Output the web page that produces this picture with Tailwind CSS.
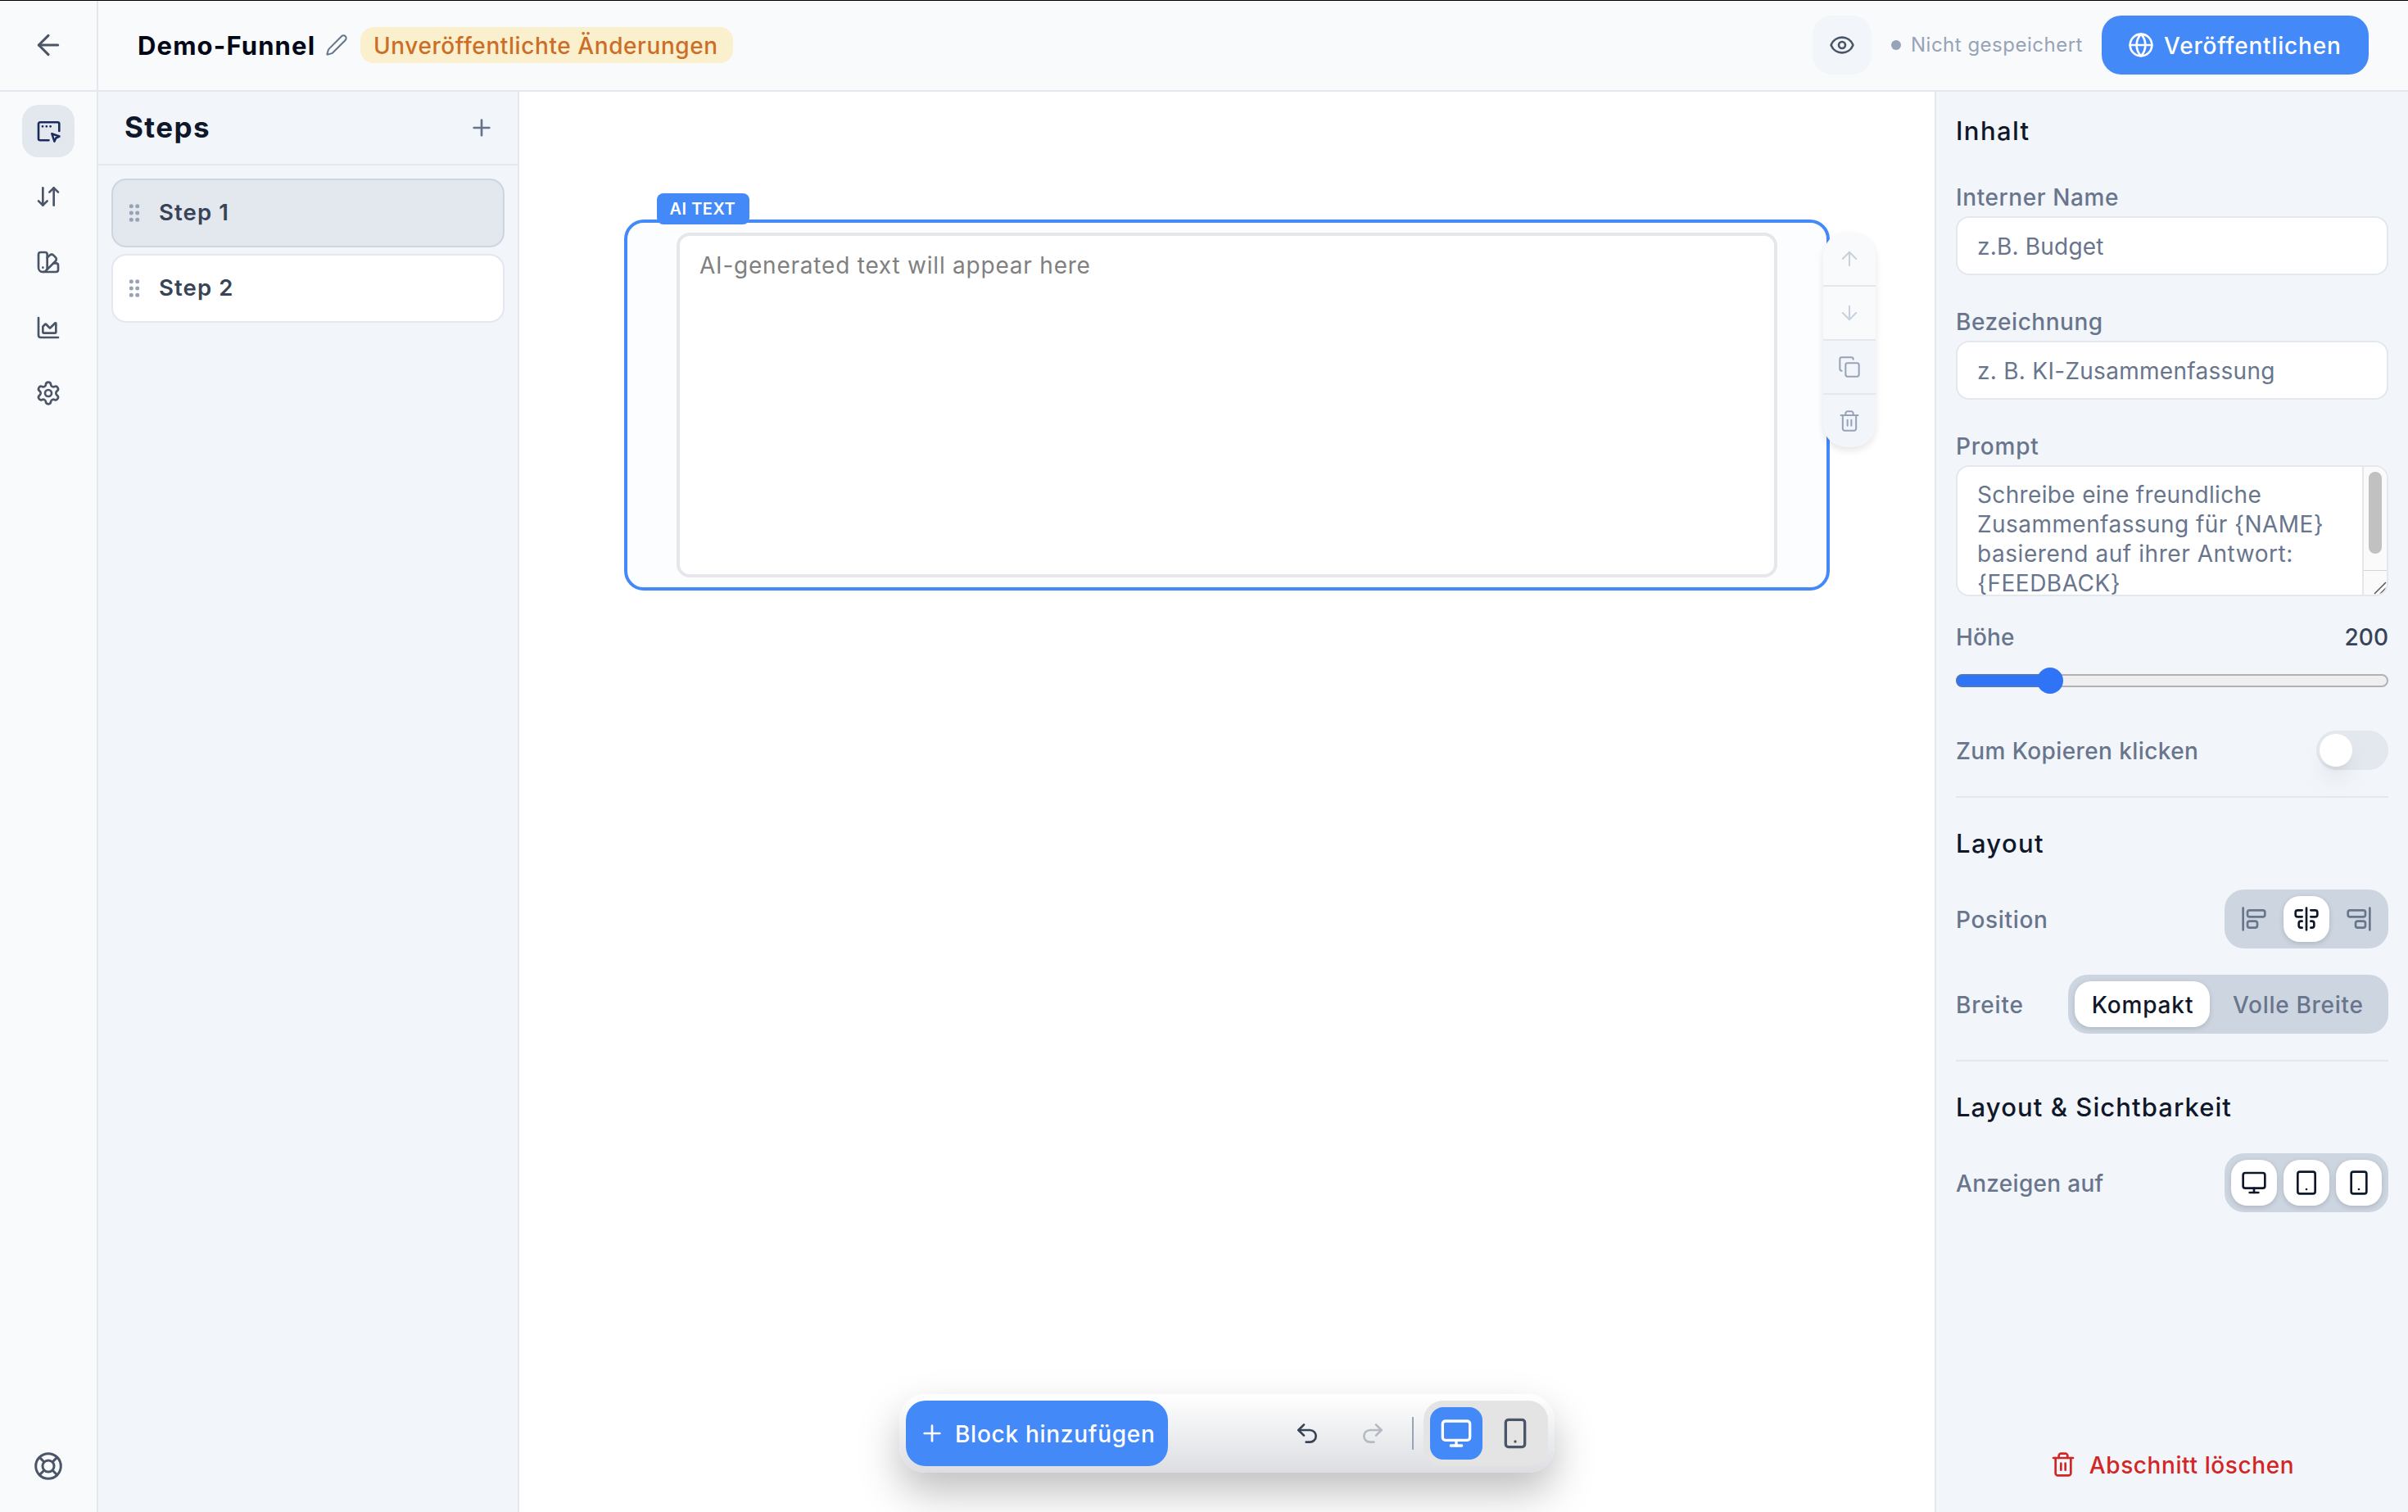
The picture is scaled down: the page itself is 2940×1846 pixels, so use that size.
<!DOCTYPE html>
<html lang="de">
<head>
<meta charset="utf-8">
<title>Demo-Funnel</title>
<script src="https://cdn.jsdelivr.net/npm/@tailwindcss/browser@4"></script>
</head>
<body class="h-[1846px] w-[2940px] overflow-hidden bg-white font-['Inter',sans-serif] text-[28px] leading-none text-[#0f172a]">
<!-- Icon sprite -->
<svg class="hidden">
  <symbol id="pencil" viewBox="0 0 24 24"><path d="M21.174 6.812a1 1 0 0 0-3.986-3.987L3.842 16.174a2 2 0 0 0-.5.83l-1.321 4.352a.5.5 0 0 0 .623.622l4.353-1.32a2 2 0 0 0 .83-.497z"/></symbol>
  <symbol id="trash" viewBox="0 0 24 24"><path d="M3 6h18"/><path d="M19 6v14c0 1-1 2-2 2H7c-1 0-2-1-2-2V6"/><path d="M8 6V4c0-1 1-2 2-2h4c1 0 2 1 2 2v2"/><path d="M10 11v6"/><path d="M14 11v6"/></symbol>
  <symbol id="monitor" viewBox="0 0 24 24"><rect width="20" height="14" x="2" y="3" rx="2"/><path d="M8 21h8"/><path d="M12 17v4"/></symbol>
  <symbol id="phone" viewBox="0 0 24 24"><rect width="14" height="20" x="5" y="2" rx="2"/><path d="M12 18h.01"/></symbol>
  <symbol id="plus" viewBox="0 0 24 24"><path d="M5 12h14"/><path d="M12 5v14"/></symbol>
  <symbol id="grip" viewBox="0 0 14 22"><g fill="currentColor" stroke="none"><circle cx="3.3" cy="2.7" r="2.5"/><circle cx="10.7" cy="2.7" r="2.5"/><circle cx="3.3" cy="11" r="2.5"/><circle cx="10.7" cy="11" r="2.5"/><circle cx="3.3" cy="19.3" r="2.5"/><circle cx="10.7" cy="19.3" r="2.5"/></g></symbol>
</svg>
<div class="relative flex h-full w-full">
  <div class="absolute inset-x-0 top-0 h-px bg-black"></div>

  <!-- Icon rail -->
  <nav class="flex w-[120px] shrink-0 flex-col items-center border-r-2 border-[#e3e7ee] bg-[#f9fafc] text-[#4a5568]">
    <div class="flex h-28 w-full items-center justify-center border-b-2 border-[#e3e7ee]">
      <svg class="size-10 fill-none stroke-current stroke-[1.85]" viewBox="0 0 24 24" stroke-linecap="round" stroke-linejoin="round"><path d="m12 19-7-7 7-7"/><path d="M19 12H5"/></svg>
    </div>
    <div class="mt-4 flex size-16 items-center justify-center rounded-[20px] bg-[#e3e7ee] text-[#1c2b5e]">
      <svg class="size-8 fill-none stroke-current stroke-[2.6]" viewBox="0 0 32 32" stroke-linecap="round" stroke-linejoin="round"><path d="M16.5 27.2H6A2 2 0 0 1 4 25.200V7.300a2 2 0 0 1 2-2h21.300a2 2 0 0 1 2 2V16"/><path stroke-width="2.800" d="M9 10.300h.01M13.800 10.300h.01M18.600 10.300h.01"/><path stroke-width="2.500" d="M20.300 19.200l9.200 3.300-4.200 2-1.900 4.200z"/></svg>
    </div>
    <div class="mt-4 flex size-16 items-center justify-center">
      <svg class="size-8 fill-none stroke-current stroke-2" viewBox="0 0 24 24" stroke-linecap="round" stroke-linejoin="round"><path d="m3 16 4 4 4-4"/><path d="M7 20V4"/><path d="m21 8-4-4-4 4"/><path d="M17 4v16"/></svg>
    </div>
    <div class="mt-4 flex size-16 items-center justify-center">
      <svg class="size-8 fill-none stroke-current stroke-2" viewBox="0 0 24 24" stroke-linecap="round" stroke-linejoin="round"><path d="M11 17a4 4 0 0 1-8 0V5a2 2 0 0 1 2-2h4a2 2 0 0 1 2 2Z"/><path d="M16.700 13H19a2 2 0 0 1 2 2v4a2 2 0 0 1-2 2H7"/><path d="M7 17h.01"/><path d="m11 8 2.300-2.300a2.400 2.400 0 0 1 3.404.004L18.600 7.600a2.400 2.400 0 0 1 .026 3.434L9.900 19.800"/></svg>
    </div>
    <div class="mt-4 flex size-16 items-center justify-center">
      <svg class="size-8 fill-none stroke-current stroke-2" viewBox="0 0 24 24" stroke-linecap="round" stroke-linejoin="round"><path d="M3 3v16a2 2 0 0 0 2 2h16"/><path d="M7 11.207a.5.5 0 0 1 .146-.353l2-2a.5.5 0 0 1 .708 0l3.292 3.292a.5.5 0 0 0 .708 0l4.292-4.292a.5.5 0 0 1 .854.353V16a1 1 0 0 1-1 1H8a1 1 0 0 1-1-1z"/></svg>
    </div>
    <div class="mt-4 flex size-16 items-center justify-center">
      <svg class="size-8 fill-none stroke-current stroke-2" viewBox="0 0 24 24" stroke-linecap="round" stroke-linejoin="round"><path d="M9.671 4.136a2.340 2.340 0 0 1 4.659 0 2.340 2.340 0 0 0 3.319 1.915 2.340 2.340 0 0 1 2.330 4.033 2.340 2.340 0 0 0 0 3.831 2.340 2.340 0 0 1-2.330 4.033 2.340 2.340 0 0 0-3.319 1.915 2.340 2.340 0 0 1-4.659 0 2.340 2.340 0 0 0-3.320-1.915 2.340 2.340 0 0 1-2.330-4.033 2.340 2.340 0 0 0 0-3.831A2.340 2.340 0 0 1 6.350 6.051a2.340 2.340 0 0 0 3.319-1.915"/><circle cx="12" cy="12" r="3"/></svg>
    </div>
    <svg class="mt-auto mb-[38px] size-9 fill-none stroke-current stroke-2" viewBox="0 0 24 24" stroke-linecap="round" stroke-linejoin="round"><circle cx="12" cy="12" r="10.200"/><path d="m4.930 4.930 3.540 3.540"/><path d="m15.530 8.470 3.540-3.540"/><path d="m15.530 15.530 3.540 3.540"/><path d="m8.470 15.530-3.540 3.540"/><circle cx="12" cy="12" r="4.700"/></svg>
  </nav>

  <div class="flex min-w-0 flex-1 flex-col">
    <!-- Header -->
    <header class="flex h-28 shrink-0 items-center border-b-2 border-[#e3e7ee] bg-[#f9fafc] pr-12 pl-12">
      <h1 class="w-[229px] text-[31px] font-[650] tracking-[1.15px] whitespace-nowrap text-[#020817]">Demo-Funnel</h1>
      <svg class="size-[28px] fill-none stroke-[#64748b] stroke-[1.7]" stroke-linecap="round" stroke-linejoin="round"><use href="#pencil"/></svg>
      <span class="ml-[15px] flex h-11 w-[455px] items-center rounded-2xl bg-[#fbf0cd] pt-px pl-4 font-[550] tracking-[0.58px] whitespace-nowrap text-[#cb6e28]">Unveröffentlichte Änderungen</span>
      <div class="ml-auto flex size-[72px] items-center justify-center rounded-3xl bg-[#f2f5fa]">
        <svg class="size-8 fill-none stroke-[#4a5568] stroke-2" viewBox="0 0 24 24" stroke-linecap="round" stroke-linejoin="round"><path d="M2.062 12.348a1 1 0 0 1 0-.696 10.750 10.750 0 0 1 19.876 0 1 1 0 0 1 0 .696 10.750 10.750 0 0 1-19.876 0"/><circle cx="12" cy="12" r="3"/></svg>
      </div>
      <span class="ml-6 size-3 rounded-full bg-[#97a3b6]"></span>
      <span class="ml-3 w-[209px] text-[24px] tracking-[0.5px] whitespace-nowrap text-[#97a3b6]">Nicht gespeichert</span>
      <button class="ml-6 flex h-[72px] w-[326px] items-center rounded-3xl bg-[#4489f8] pl-8 font-[550] tracking-[0.8px] text-white">
        <svg class="size-8 fill-none stroke-current stroke-2" viewBox="0 0 24 24" stroke-linecap="round" stroke-linejoin="round"><circle cx="12" cy="12" r="10"/><path d="M12 2a14.500 14.500 0 0 0 0 20 14.500 14.500 0 0 0 0-20"/><path d="M2 12h20"/></svg>
        <span class="mt-px ml-3">Veröffentlichen</span>
      </button>
    </header>

    <div class="flex min-h-0 flex-1">
      <!-- Steps -->
      <aside class="w-[514px] shrink-0 border-r-2 border-[#e3e7ee] bg-[#f2f5fa]">
        <div class="flex h-[90px] items-center justify-between border-b-2 border-[#e3e7ee] pr-7 pl-8">
          <h2 class="-mt-0.5 text-[35px] font-[650] tracking-[1.4px]">Steps</h2>
          <svg class="size-8 fill-none stroke-[#64748b] stroke-2" stroke-linecap="round" stroke-linejoin="round"><use href="#plus"/></svg>
        </div>
        <div class="flex flex-col gap-2 p-4 text-[27.500px] font-[620] tracking-[1.1px] text-[#374357]">
          <div class="flex h-[84px] items-center rounded-[18px] border-2 border-[#cdd5e0] bg-[#e3e7ee] pl-[19px]"><svg class="h-[22px] w-3.5 text-[#97a3b6]"><use href="#grip"/></svg><span class="ml-[23px]">Step 1</span></div>
          <div class="flex h-[84px] items-center rounded-[18px] border-2 border-[#e3e7ee] bg-white pl-[19px]"><svg class="h-[22px] w-3.5 text-[#97a3b6]"><use href="#grip"/></svg><span class="ml-[23px]">Step 2</span></div>
        </div>
      </aside>

      <!-- Canvas -->
      <main class="relative min-w-0 flex-1 bg-white px-32 pt-[156px]">
        <section class="relative h-[453px] rounded-3xl border-4 border-[#4489f8] bg-[#fcfdff] px-[60px] pt-3">
          <div class="h-[421px] rounded-2xl border-4 border-[#e5e7eb] bg-white px-6 pt-4 leading-10 tracking-[0.78px] text-[#808080]">AI-generated text will appear here</div>
          <span class="absolute -top-9 left-9 flex h-[38px] w-[113px] items-center rounded-lg bg-[#4489f8] pl-[15.500px] text-[20px] font-semibold tracking-[0.5px] whitespace-nowrap text-white">AI TEXT</span>
          <div class="absolute top-3 -right-[60px] flex h-[262px] w-16 flex-col overflow-hidden rounded-[28px] bg-[#f2f5fa] text-[#97a3b6] shadow-[0_4px_8px_rgba(0,0,0,0.1)]">
            <div class="flex h-[66px] items-center justify-center border-b-2 border-[#e3e7ee] bg-[#f9fafc] text-[#c9d1dc]"><svg class="size-7 fill-none stroke-current stroke-[1.75]" viewBox="0 0 24 24" stroke-linecap="round" stroke-linejoin="round"><path d="m5 12 7-7 7 7"/><path d="M12 19V5"/></svg></div>
            <div class="flex h-[66px] items-center justify-center border-b-2 border-[#e3e7ee] bg-[#f9fafc] text-[#c9d1dc]"><svg class="size-7 fill-none stroke-current stroke-[1.75]" viewBox="0 0 24 24" stroke-linecap="round" stroke-linejoin="round"><path d="M12 5v14"/><path d="m19 12-7 7-7-7"/></svg></div>
            <div class="flex h-[66px] items-center justify-center border-b-2 border-[#e3e7ee]"><svg class="size-7 fill-none stroke-current stroke-[1.75]" viewBox="0 0 24 24" stroke-linecap="round" stroke-linejoin="round"><rect width="14" height="14" x="8" y="8" rx="2"/><path d="M4 16c-1.100 0-2-.9-2-2V4c0-1.100.9-2 2-2h10c1.100 0 2 .9 2 2"/></svg></div>
            <div class="flex h-16 items-center justify-center"><svg class="size-7 fill-none stroke-current stroke-[1.75]" stroke-linecap="round" stroke-linejoin="round"><use href="#trash"/></svg></div>
          </div>
        </section>

        <!-- Floating toolbar -->
        <div class="absolute bottom-12 left-1/2 flex h-24 w-[800px] -translate-x-1/2 items-center rounded-[32px] bg-linear-to-b from-white to-[#dcdee2] px-2 shadow-[0_24px_50px_rgba(0,0,0,0.25)]">
          <button class="flex h-20 w-80 items-center rounded-3xl bg-[#4489f8] pl-4 font-[550] tracking-[0.72px] whitespace-nowrap text-white">
            <svg class="size-8 fill-none stroke-current stroke-2" stroke-linecap="round" stroke-linejoin="round"><use href="#plus"/></svg>
            <span class="mt-px ml-3">Block hinzufügen</span>
          </button>
          <svg class="ml-[154px] size-8 fill-none stroke-[#374357] stroke-2" viewBox="0 0 24 24" stroke-linecap="round" stroke-linejoin="round"><path d="M9 14 4 9l5-5"/><path d="M4 9h10.500a5.500 5.500 0 0 1 5.500 5.500a5.500 5.500 0 0 1-5.500 5.500H11"/></svg>
          <svg class="ml-12 size-8 fill-none stroke-[#b6bac2] stroke-2" viewBox="0 0 24 24" stroke-linecap="round" stroke-linejoin="round"><path d="m15 14 5-5-5-5"/><path d="M20 9H9.500A5.500 5.500 0 0 0 4 14.500A5.500 5.500 0 0 0 9.500 20H13"/></svg>
          <span class="ml-8 h-10 w-0.5 bg-[#97a3b6]"></span>
          <div class="ml-3 flex h-20 gap-2 rounded-3xl bg-[#e4e4e4] p-2">
            <div class="flex size-16 items-center justify-center rounded-2xl bg-[#4489f8] text-white"><svg class="size-10 fill-none stroke-current stroke-2" stroke-linecap="round" stroke-linejoin="round"><use href="#monitor"/></svg></div>
            <div class="flex size-16 items-center justify-center text-[#4a5568]"><svg class="size-10 fill-none stroke-current stroke-2" stroke-linecap="round" stroke-linejoin="round"><use href="#phone"/></svg></div>
          </div>
        </div>
      </main>

      <!-- Properties -->
      <aside class="flex w-[578px] shrink-0 flex-col border-l-2 border-[#e3e7ee] bg-[#f2f5fa] px-6 pt-6 font-[550] text-[#68758c]">
        <h3 class="text-[31px] leading-[48px] tracking-[1.4px] text-[#0f172a]">Inhalt</h3>
        <label class="mt-[34px] leading-[46px] tracking-[0.6px]">Interner Name</label>
        <div class="flex h-[72px] items-center rounded-2xl border-2 border-[#e3e7ee] bg-white pt-px pl-6 font-normal tracking-[0.2px]">z.B. Budget</div>
        <label class="mt-[34px] leading-[46px] tracking-[0.52px]">Bezeichnung</label>
        <div class="flex h-[72px] items-center rounded-2xl border-2 border-[#e3e7ee] bg-white pt-px pl-6 font-normal tracking-[0.28px]">z. B. KI-Zusammenfassung</div>
        <label class="mt-[34px] leading-[46px] tracking-[0.8px]">Prompt</label>
        <div class="flex h-40 overflow-hidden rounded-2xl border-2 border-[#e3e7ee] bg-white font-normal">
          <div class="flex-1 overflow-hidden pt-4 pl-6 leading-9 whitespace-nowrap">
            <div class="tracking-[0.35px]">Schreibe eine freundliche</div>
            <div class="tracking-[0.44px]">Zusammenfassung für {NAME}</div>
            <div class="tracking-[0.55px]">basierend auf ihrer Antwort:</div>
            <div class="tracking-[0.5px]">{FEEDBACK}</div>
          </div>
          <div class="flex w-[30px] flex-col border-l-2 border-[#e6e6e6] bg-[#fafafa]">
            <div class="flex h-[126px] justify-center pt-1.5"><div class="h-[100px] w-4 rounded-full bg-[#c1c1c1]"></div></div>
            <div class="flex flex-1 items-end justify-end border-t border-[#d5d5d5]"><svg class="size-4 fill-none stroke-[#555] stroke-[1.5]" viewBox="0 0 16 16"><path d="M1 15 15 1M8 15l7-7"/></svg></div>
          </div>
        </div>
        <div class="mt-[27px] flex justify-between leading-[46px]"><span class="tracking-[0.1px]">Höhe</span><span class="text-[#374357]">200</span></div>
        <div class="relative mt-3.5 flex h-8 items-center">
          <div class="h-4 w-full rounded-full border-2 border-[#b2b2b2] bg-[#efefef]"></div>
          <div class="absolute top-2 left-0 h-4 w-[115px] rounded-l-full border-2 border-r-0 border-[#4b76c4] bg-[#2f73f6]"></div>
          <div class="absolute top-0 left-[99px] size-8 rounded-full bg-[#2f73f6]"></div>
        </div>
        <div class="mt-[45px] flex items-center justify-between">
          <span class="mt-px tracking-[0.4px]">Zum Kopieren klicken</span>
          <div class="h-12 w-[88px] rounded-full bg-[#e3e7ee] p-1"><div class="size-10 rounded-full bg-white shadow-[0_20px_30px_-6px_rgba(0,0,0,0.1),0_8px_12px_-8px_rgba(0,0,0,0.1)]"></div></div>
        </div>
        <hr class="mt-8 border-t-2 border-[#e3e7ee]">
        <h3 class="mt-8 text-[31px] leading-[48px] tracking-[1.35px] text-[#0f172a]">Layout</h3>
        <div class="mt-8 flex items-center justify-between">
          <span class="mt-px tracking-[0.68px]">Position</span>
          <div class="flex gap-2 rounded-3xl bg-[#cdd5e0] p-2">
            <div class="flex size-14 items-center justify-center"><svg class="size-8 fill-none stroke-current stroke-2" viewBox="0 0 24 24" stroke-linecap="round" stroke-linejoin="round"><rect width="9" height="6" x="6" y="14" rx="2"/><rect width="16" height="6" x="6" y="4" rx="2"/><path d="M2 2v20"/></svg></div>
            <div class="flex size-14 items-center justify-center rounded-[20px] bg-white text-[#0f172a] shadow-[0_2px_6px_rgba(0,0,0,0.15)]"><svg class="size-8 fill-none stroke-current stroke-2" viewBox="0 0 24 24" stroke-linecap="round" stroke-linejoin="round"><path d="M12 2v20"/><path d="M8 10H4a2 2 0 0 1-2-2V6c0-1.100.9-2 2-2h4"/><path d="M16 10h4a2 2 0 0 0 2-2V6a2 2 0 0 0-2-2h-4"/><path d="M8 20H7a2 2 0 0 1-2-2v-2c0-1.100.9-2 2-2h1"/><path d="M16 14h1a2 2 0 0 1 2 2v2a2 2 0 0 1-2 2h-1"/></svg></div>
            <div class="flex size-14 items-center justify-center"><svg class="size-8 fill-none stroke-current stroke-2" viewBox="0 0 24 24" stroke-linecap="round" stroke-linejoin="round"><rect width="16" height="6" x="2" y="4" rx="2"/><rect width="9" height="6" x="9" y="14" rx="2"/><path d="M22 22V2"/></svg></div>
          </div>
        </div>
        <div class="mt-8 flex items-center justify-between">
          <span class="mt-px tracking-[0.8px]">Breite</span>
          <div class="flex h-[72px] w-[391px] rounded-3xl bg-[#cdd5e0] p-2">
            <div class="flex w-[165px] items-center justify-center rounded-[20px] bg-white pt-px pl-px tracking-[0.85px] text-[#0f172a] shadow-[0_2px_6px_rgba(0,0,0,0.15)]">Kompakt</div>
            <div class="flex flex-1 items-center pt-px pl-7 tracking-[0.7px] whitespace-nowrap">Volle Breite</div>
          </div>
        </div>
        <hr class="mt-8 border-t-2 border-[#e3e7ee]">
        <h3 class="mt-8 text-[31px] leading-[48px] tracking-[1.08px] text-[#0f172a]">Layout &amp; Sichtbarkeit</h3>
        <div class="mt-8 flex items-center justify-between">
          <span class="mt-px tracking-[0.3px]">Anzeigen auf</span>
          <div class="flex gap-2 rounded-3xl bg-[#cdd5e0] p-2 text-[#0f172a]">
            <div class="flex size-14 items-center justify-center rounded-[20px] bg-white shadow-[0_2px_6px_rgba(0,0,0,0.15)]"><svg class="size-8 fill-none stroke-current stroke-2" stroke-linecap="round" stroke-linejoin="round"><use href="#monitor"/></svg></div>
            <div class="flex size-14 items-center justify-center rounded-[20px] bg-white shadow-[0_2px_6px_rgba(0,0,0,0.15)]"><svg class="size-8 fill-none stroke-current stroke-2" viewBox="0 0 24 24" stroke-linecap="round" stroke-linejoin="round"><rect width="16" height="20" x="4" y="2" rx="2"/><path d="M12 18h.01"/></svg></div>
            <div class="flex size-14 items-center justify-center rounded-[20px] bg-white shadow-[0_2px_6px_rgba(0,0,0,0.15)]"><svg class="size-8 fill-none stroke-current stroke-2" stroke-linecap="round" stroke-linejoin="round"><use href="#phone"/></svg></div>
          </div>
        </div>
        <button class="mt-auto mb-[42px] flex items-center justify-center gap-4 tracking-[0.6px] text-[#d42525]">
          <svg class="size-8 fill-none stroke-current stroke-2" stroke-linecap="round" stroke-linejoin="round"><use href="#trash"/></svg>
          <span class="mt-px">Abschnitt löschen</span>
        </button>
      </aside>
    </div>
  </div>
</div>
</body>
</html>
